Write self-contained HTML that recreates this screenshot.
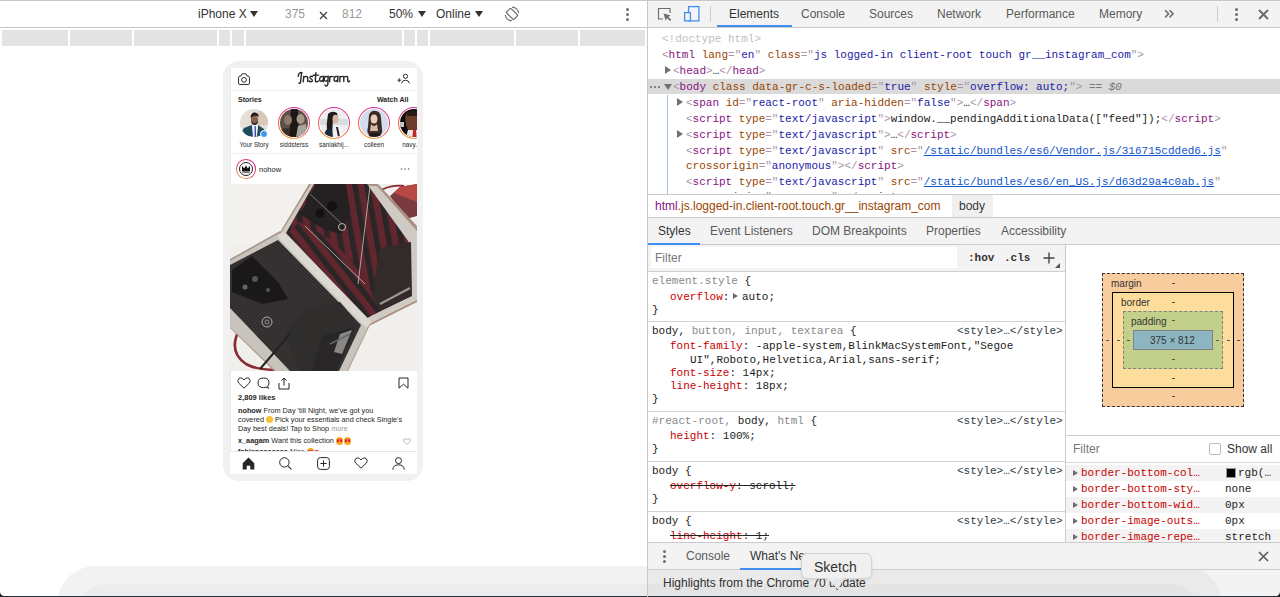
<!DOCTYPE html>
<html><head><meta charset="utf-8">
<style>
*{margin:0;padding:0;box-sizing:border-box}
html,body{width:1280px;height:597px;overflow:hidden;background:#fff;font-family:"Liberation Sans",sans-serif;font-size:12px;color:#333;position:relative}
.a{position:absolute}
.t{position:absolute;white-space:pre;line-height:16px}
.m{font-family:"Liberation Mono",monospace;font-size:11px}
.tg{color:#881280}.an{color:#994500}.av{color:#1a1aa6}.br{color:#a894a6}.dt{color:#c0c0c0}.lk{color:#1155cc;text-decoration:underline}
.pn{color:#c80000}
.dots{width:4px;height:14px}
.dots i{display:block;width:3px;height:3px;border-radius:50%;background:#6e6e6e;margin-bottom:2px}
.tri{position:absolute;width:0;height:0;border-top:4px solid transparent;border-bottom:4px solid transparent;border-left:6px solid #727272}
.tri.sm{border-top-width:3.8px;border-bottom-width:3.8px;border-left-width:5.5px;border-left-color:#6e6e6e}
.trid{position:absolute;width:0;height:0;border-left:4px solid transparent;border-right:4px solid transparent;border-top:6px solid #727272}
.tdn{position:absolute;width:0;height:0;border-left:4px solid transparent;border-right:4px solid transparent;border-top:6px solid #333}
</style></head><body>
<div class="a" style="left:0;top:0;width:1280px;height:1px;background:#c8c8c8"></div>
<!-- LEFT PANEL -->
<div class="a" style="left:0;top:1px;width:647px;height:27px;background:#fff;border-bottom:1px solid #c8c8c8"></div>
<div class="t" style="left:198px;top:6px;color:#333">iPhone X</div>
<div class="tdn" style="left:250px;top:11px"></div>
<div class="t" style="left:285px;top:6px;color:#999">375</div>
<svg class="a" style="left:319px;top:11px" width="9" height="9" viewBox="0 0 9 9"><path d="M1 1L8 8M8 1L1 8" stroke="#444" stroke-width="1.3"/></svg>
<div class="t" style="left:342px;top:6px;color:#999">812</div>
<div class="t" style="left:389px;top:6px;color:#333">50%</div>
<div class="tdn" style="left:418px;top:11px"></div>
<div class="t" style="left:436px;top:6px;color:#333">Online</div>
<div class="tdn" style="left:475px;top:11px"></div>
<svg class="a" style="left:504px;top:6px" width="16" height="16" viewBox="0 0 16 16"><rect x="4.85" y="2.7" width="6.3" height="10.4" rx="0.8" transform="rotate(-45 8 7.9)" fill="none" stroke="#707070" stroke-width="1.2"/><path d="M8.1 1.1A6.8 6.8 0 0 1 14.7 7M7.8 14.7A6.8 6.8 0 0 1 1.3 9" fill="none" stroke="#707070" stroke-width="1.2"/></svg>
<div class="a dots" style="left:626px;top:8px"><i></i><i></i><i></i></div>

<!-- ruler -->
<div class="a" style="left:2px;top:30px;width:643px;height:16px;background:#e3e3e3"></div>
<div class="a" style="left:68px;top:30px;width:2px;height:16px;background:#fff"></div>
<div class="a" style="left:132px;top:30px;width:2px;height:16px;background:#fff"></div>
<div class="a" style="left:217px;top:30px;width:2px;height:16px;background:#fff"></div>
<div class="a" style="left:230px;top:30px;width:2px;height:16px;background:#fff"></div>
<div class="a" style="left:244px;top:30px;width:2px;height:16px;background:#fff"></div>
<div class="a" style="left:402px;top:30px;width:2px;height:16px;background:#fff"></div>
<div class="a" style="left:415px;top:30px;width:2px;height:16px;background:#fff"></div>
<div class="a" style="left:428px;top:30px;width:2px;height:16px;background:#fff"></div>
<div class="a" style="left:514px;top:30px;width:2px;height:16px;background:#fff"></div>
<div class="a" style="left:578px;top:30px;width:2px;height:16px;background:#fff"></div>

<!-- PHONE -->
<div class="a" style="left:223px;top:61px;width:200px;height:420px;background:#f1f1f1;border-radius:16px"></div>
<div id="scr" class="a" style="left:230px;top:68px;width:187px;height:406px;background:#fff;overflow:hidden">
  <div class="a" style="left:0;top:0;width:1px;height:406px;background:#e8e8e8"></div>
  <!-- header -->
  <div class="a" style="left:0;top:22px;width:187px;height:1px;background:#efefef"></div>
  <svg class="a" style="left:7px;top:5px" width="14" height="13" viewBox="0 0 14 13"><path d="M1.5 4.6Q1.5 3.1 3 3.1H3.9L5.1 0.8H8.9L10.1 3.1H11Q12.5 3.1 12.5 4.6V10Q12.5 11.5 11 11.5H3Q1.5 11.5 1.5 10Z" fill="none" stroke="#262626" stroke-width="0.95"/><circle cx="7" cy="6.9" r="2.4" fill="none" stroke="#262626" stroke-width="0.95"/></svg>
  <svg class="a" style="left:67px;top:3px" width="54" height="17" viewBox="0 0 54 17"><path d="M1.2 5.2C1.5 2 3.5 1.2 5 1.6M4.6 1.8C4.2 5 3.8 9 3.4 11.8C3.2 12.5 2.4 12.6 2 12M6.2 10.8L6.8 5.4M6.8 6.6C7.5 5.2 10.5 4.8 10.6 6.5L10.8 10.6M15.6 5.6C14.5 4.8 12.4 5.4 13 7C13.6 8 15.8 8.4 15.4 9.8C15 11 13 11 12.2 10M18.9 1.8C18.6 5 18.3 8 18.4 10C18.6 11 20 11 21.4 10.2M16.2 4.3L21.6 4.1M26.4 6C25.5 5 23 5 22.6 8C22.3 10.5 24.5 11 26 9M26.6 5.2L26.2 10.8M30.8 6C30 5 27.5 5 27.2 8C27 10.5 29.5 10.8 30.8 8.8M31.2 5.2L30.8 13.5C30.6 15.5 28.2 15.5 28 14M32.6 10.8L32.9 5.4M32.9 7C33.5 5.4 35 5.2 36.2 5.6M40.8 6C39.9 5 37.4 5 37 8C36.7 10.5 38.9 11 40.4 9M41 5.2L40.6 10.8M42.8 10.8L43 5.4M43 6.6C43.6 5.2 46.8 4.8 46.8 6.5L46.8 10.6M46.8 6.6C47.4 5.2 50.6 4.8 50.6 6.5L50.8 10.2C51 11 52 10.8 52.6 10" fill="none" stroke="#262626" stroke-width="1.4" stroke-linecap="round"/></svg>
  <svg class="a" style="left:166px;top:5px" width="14" height="12" viewBox="0 0 14 12"><path d="M1.3 7.2H5.3M3.3 5.2V9.2" stroke="#262626" stroke-width="0.9"/><circle cx="9.5" cy="3.3" r="2.1" fill="none" stroke="#262626" stroke-width="0.95"/><path d="M5.6 10.4Q6.2 7.2 9.5 7.2Q12.8 7.2 13.4 10.4" fill="none" stroke="#262626" stroke-width="0.95"/></svg>
  <!-- stories -->
  <div class="t" style="left:8px;top:24px;font-size:7px;font-weight:bold;color:#262626">Stories</div>
  <div class="t" style="left:147px;top:24px;font-size:7px;font-weight:bold;color:#262626">Watch All</div>
  <svg class="a" style="left:10px;top:41px" width="28" height="28" viewBox="0 0 28 28"><clipPath id="c0"><circle cx="14" cy="14" r="14"/></clipPath><g clip-path="url(#c0)"><rect width="28" height="28" fill="#e6dfd8"/><rect x="18" y="2" width="10" height="14" fill="#d8c8b8"/><path d="M0 26L4 19L12 16L14 28Z" fill="#1f4a62"/><path d="M26 28L24 20L18 16L16 28Z" fill="#1f4a62"/><path d="M12 16L18 16L17 28L13 28Z" fill="#f4f4f4"/><path d="M14.5 17L15.8 17L16.2 28L14.6 28Z" fill="#3a4ab0"/><ellipse cx="14.5" cy="11" rx="3.6" ry="4.5" fill="#8a6450"/><path d="M10.5 9Q11 3 15 3.5Q19 4 18.5 8L17 7Q14 6 12 8Z" fill="#1e1a18"/><path d="M11.5 12Q14.5 17 17.8 12L17.5 14.5Q14.5 17.5 11.8 14.5Z" fill="#2a1e18"/></g></svg>
<div class="a" style="left:29.5px;top:62px;width:8px;height:8px;border-radius:50%;background:#3897f0;border:1px solid #fff"></div>
<div class="t" style="left:-1px;width:50px;text-align:center;top:72.5px;font-size:6.3px;line-height:8px;color:#262626">Your Story</div>
<div class="a" style="left:47.8px;top:38.8px;width:32.4px;height:32.4px;border-radius:50%;background:conic-gradient(from 0deg,#d6249f,#e4406f 90deg,#f7a34b 180deg,#f58529 225deg,#e4406f 300deg,#d6249f)"></div>
<div class="a" style="left:48.8px;top:39.8px;width:30.4px;height:30.4px;border-radius:50%;background:#fff"></div>
<svg class="a" style="left:50px;top:41px" width="28" height="28" viewBox="0 0 28 28"><clipPath id="c1"><circle cx="14" cy="14" r="14"/></clipPath><g clip-path="url(#c1)"><rect width="28" height="28" fill="#5e5048"/><path d="M11 0L18 0L19 28L9 28Z" fill="#1c1816"/><ellipse cx="8" cy="11" rx="4" ry="5" fill="#8e7868"/><ellipse cx="20.5" cy="10" rx="4" ry="5" fill="#a89888"/><path d="M16 28L18 17L26 15L28 28Z" fill="#a8a4a0"/><path d="M0 20L9 19L9 28L0 28Z" fill="#3a302a"/></g></svg>
<div class="t" style="left:39px;width:50px;text-align:center;top:72.5px;font-size:6.3px;line-height:8px;color:#262626">siddsterss</div>
<div class="a" style="left:87.8px;top:38.8px;width:32.4px;height:32.4px;border-radius:50%;background:conic-gradient(from 0deg,#d6249f,#e4406f 90deg,#f7a34b 180deg,#f58529 225deg,#e4406f 300deg,#d6249f)"></div>
<div class="a" style="left:88.8px;top:39.8px;width:30.4px;height:30.4px;border-radius:50%;background:#fff"></div>
<svg class="a" style="left:90px;top:41px" width="28" height="28" viewBox="0 0 28 28"><clipPath id="c2"><circle cx="14" cy="14" r="14"/></clipPath><g clip-path="url(#c2)"><rect width="28" height="28" fill="#eceef2"/><rect x="0" y="10" width="28" height="6" fill="#d8dce0"/><path d="M8 5Q12 1 17 4L18 9L13 10L12 26L7 26Q6 15 8 5Z" fill="#201c1c"/><ellipse cx="15.5" cy="10" rx="3" ry="4.2" fill="#d8b4a4"/><path d="M3 28L6 21L12 19L13 28Z" fill="#202a36"/><path d="M15 18L22 19L23 28L16 28Z" fill="#f4f4f8"/><path d="M16 18L18 18L20 28L18 28Z" fill="#222"/></g></svg>
<div class="t" style="left:79px;width:50px;text-align:center;top:72.5px;font-size:6.3px;line-height:8px;color:#262626">saniakhij...</div>
<div class="a" style="left:127.8px;top:38.8px;width:32.4px;height:32.4px;border-radius:50%;background:conic-gradient(from 0deg,#d6249f,#e4406f 90deg,#f7a34b 180deg,#f58529 225deg,#e4406f 300deg,#d6249f)"></div>
<div class="a" style="left:128.8px;top:39.8px;width:30.4px;height:30.4px;border-radius:50%;background:#fff"></div>
<svg class="a" style="left:130px;top:41px" width="28" height="28" viewBox="0 0 28 28"><clipPath id="c3"><circle cx="14" cy="14" r="14"/></clipPath><g clip-path="url(#c3)"><rect width="28" height="28" fill="#d2dcee"/><path d="M9 6Q11 1 16 2Q21 3 21 9L22 20Q23 25 19 27L10 27Q6 24 8 18Z" fill="#3c2a22"/><ellipse cx="14" cy="10" rx="3.4" ry="4.6" fill="#e6cebe"/><path d="M11 15Q14 19 17 15L18 22L10 22Z" fill="#d8b8a8"/><path d="M8 28L11 24L19 24L22 28Z" fill="#1c1a1a"/></g></svg>
<div class="t" style="left:119px;width:50px;text-align:center;top:72.5px;font-size:6.3px;line-height:8px;color:#262626">colleen</div>
<div class="a" style="left:167.8px;top:38.8px;width:32.4px;height:32.4px;border-radius:50%;background:conic-gradient(from 0deg,#d6249f,#e4406f 90deg,#f7a34b 180deg,#f58529 225deg,#e4406f 300deg,#d6249f)"></div>
<div class="a" style="left:168.8px;top:39.8px;width:30.4px;height:30.4px;border-radius:50%;background:#fff"></div>
<svg class="a" style="left:170px;top:41px" width="28" height="28" viewBox="0 0 28 28"><clipPath id="c4"><circle cx="14" cy="14" r="14"/></clipPath><g clip-path="url(#c4)"><rect width="28" height="28" fill="#0a0a0a"/><path d="M6 5Q12 1 20 4L21 12L20 21L8 21Q4 13 6 5Z" fill="#6a3a2a"/><path d="M7 3Q13 0 21 3L20 7L7 7Z" fill="#2a1a14"/><path d="M8 21L22 21L24 28L6 28Z" fill="#e8e8e8"/><path d="M13 21L16 21L16.5 28L12.5 28Z" fill="#c02828"/><rect x="0" y="13" width="4" height="5" fill="#c8c8c0"/></g></svg>
<div class="t" style="left:159px;width:50px;text-align:center;top:72.5px;font-size:6.3px;line-height:8px;color:#262626">navy.n...</div>
  <div class="a" style="left:0;top:85px;width:187px;height:1px;background:#efefef"></div>
  <!-- post header -->
  <div class="a" style="left:6px;top:91px;width:19.5px;height:19.5px;border-radius:50%;background:conic-gradient(from 200deg,#f7a34b,#e4406f 120deg,#d6249f 200deg,#e4406f 280deg,#f7a34b)"></div>
  <div class="a" style="left:7px;top:92px;width:17.5px;height:17.5px;border-radius:50%;background:#fff"></div>
  <div class="a" style="left:8.5px;top:93.5px;width:14.5px;height:14.5px;border-radius:50%;background:#fff;border:1.2px solid #222"></div>
  <svg class="a" style="left:11px;top:96.5px" width="10" height="10" viewBox="0 0 10 10"><path d="M1 0.8L3.2 3.6L5 0.2L6.8 3.6L9 0.8V6.6H1Z" fill="#111"/><rect x="1.5" y="7.2" width="7" height="0.9" fill="#555"/></svg>
  <div class="t" style="left:29px;top:97px;font-size:7.5px;line-height:10px;color:#1a1a1a">nohow</div>
  <svg class="a" style="left:170px;top:99px" width="10" height="4" viewBox="0 0 10 4"><circle cx="1.5" cy="2" r="0.75" fill="#555"/><circle cx="5" cy="2" r="0.75" fill="#555"/><circle cx="8.5" cy="2" r="0.75" fill="#555"/></svg>
  <!-- image -->
  <svg class="a" style="left:0;top:116px" width="187" height="187" viewBox="0 0 187 187">
<defs>
<pattern id="st" width="12" height="12" patternUnits="userSpaceOnUse" patternTransform="rotate(-10)"><rect width="12" height="12" fill="#62262f"/><rect width="5.5" height="12" fill="#2a2526"/></pattern>
<pattern id="st2" width="12" height="12" patternUnits="userSpaceOnUse" patternTransform="rotate(-38)"><rect width="12" height="12" fill="#62262f"/><rect width="5.5" height="12" fill="#2a2526"/></pattern>
<pattern id="cd" width="2.5" height="2.5" patternUnits="userSpaceOnUse" patternTransform="rotate(-50)"><rect width="2.5" height="2.5" fill="#3a3736"/><rect width="1" height="2.5" fill="#2a2828"/></pattern>
</defs>
<rect width="187" height="187" fill="#f1efec"/>
<rect x="0" y="0" width="90" height="60" fill="#f3f1ee"/>
<path d="M9 146Q-2 168 16 180Q30 188 62 185" fill="none" stroke="#8a2a30" stroke-width="2.6"/>
<path d="M148 8Q160 0 174 2" fill="none" stroke="#8a2a30" stroke-width="1.8"/>
<polygon points="160,12 170,3 187,0 187,32 176,35" fill="#7a3a40"/>
<polygon points="170,3 187,0 187,18 164,9" fill="#b84844"/>
<polygon points="79,0 148,0 188,43 187,118 139,142 49,50" fill="#a89080"/>
<polygon points="81,0 147,2 187,47 187,116 139,140 51,49" fill="#cfcac4"/>
<polygon points="84,0 137,0 176,54 180,60 181,112 137,134 56,49" fill="url(#st)"/>
<polygon points="57,49 70,38 100,55 125,80 140,105 150,126 137,134" fill="url(#st2)"/><path d="M75 42L135 100" stroke="#c8c4c0" stroke-width="0.8"/><path d="M140 2L128 100" stroke="#c8c4c0" stroke-width="0.8"/>
<polygon points="86,0 116,0 120,28 112,50 95,46 70,30" fill="#252122"/>
<circle cx="102" cy="22" r="5" fill="#121010"/>
<circle cx="90" cy="29" r="4.5" fill="#121010"/><path d="M80 10L112 40" stroke="#888" stroke-width="0.8"/>
<polygon points="150,64 181,58 182,112 150,127 142,110" fill="#332a2a"/>
<path d="M150 120L180 104" stroke="#9a9694" stroke-width="2"/>
<polygon points="0,75 50,47 140,141 118,187 44,187 0,144" fill="#a89888"/>
<polygon points="0,77 50,49 139,141 117,187 46,187 0,143" fill="#c8c3bd"/>
<polygon points="0,81 48,56 131,141 109,187 60,187 0,124" fill="url(#cd)"/>
<polygon points="2,86 22,72 48,98 58,115 32,120 2,108" fill="#1a1819"/>
<circle cx="25" cy="95" r="3" fill="#555"/><circle cx="15" cy="103" r="2.5" fill="#666"/><circle cx="38" cy="106" r="2" fill="#555"/>
<polygon points="75,125 110,118 128,139 107,187 70,187 55,150" fill="#302d2d"/>
<polygon points="92,152 124,143 106,187 82,187" fill="#282626"/><polygon points="110,150 122,146 112,170 104,168" fill="#8a8886"/>
<path d="M100 160L120 150" stroke="#666" stroke-width="1.5"/>
<path d="M50 50L139 141" stroke="#dcd8d2" stroke-width="8"/>
<path d="M30 185L60 150" stroke="#222" stroke-width="2"/>
<circle cx="112" cy="43" r="3.5" fill="none" stroke="#ddd" stroke-width="0.8"/>
<circle cx="37" cy="138" r="5" fill="none" stroke="#ccc" stroke-width="0.8"/>
<circle cx="37" cy="138" r="2" fill="none" stroke="#ccc" stroke-width="0.6"/>
</svg>

  <!-- actions -->
  <svg class="a" style="left:7px;top:309px" width="14" height="12" viewBox="0 0 14 12"><path d="M7 11.2L1.8 6.2Q0.6 4.8 0.9 3.2Q1.4 1 3.6 0.9Q5.6 0.9 7 3Q8.4 0.9 10.4 0.9Q12.6 1 13.1 3.2Q13.4 4.8 12.2 6.2Z" fill="none" stroke="#262626" stroke-width="1"/></svg>
  <svg class="a" style="left:27px;top:309px" width="13" height="12" viewBox="0 0 13 12"><path d="M10.6 9.4Q12 8 12 5.8Q12 1 6.5 1Q1 1 1 5.8Q1 10.6 6.5 10.6Q8 10.6 9.2 10.1L11.6 11.3Z" fill="none" stroke="#262626" stroke-width="1" stroke-linejoin="round"/></svg>
  <svg class="a" style="left:48px;top:309px" width="12" height="13" viewBox="0 0 12 13"><path d="M6 1.2V8.6M3.4 3.6L6 1L8.6 3.6M1 6V12H11V6" fill="none" stroke="#262626" stroke-width="1"/></svg>
  <svg class="a" style="left:168px;top:309px" width="11" height="12" viewBox="0 0 11 12"><path d="M1 1H10V11.2L5.5 7.2L1 11.2Z" fill="none" stroke="#262626" stroke-width="1" stroke-linejoin="round"/></svg>
  <div class="t" style="left:8px;top:325px;font-size:7.5px;line-height:10px;font-weight:bold;color:#262626">2,809 likes</div>
  <div class="t" style="left:8px;top:338px;font-size:7.3px;line-height:9px;color:#262626"><b>nohow</b> From Day 'till Night, we've got you
covered <span style="display:inline-block;width:7px;height:7px;border-radius:50%;background:#f7c23a;vertical-align:-1px"></span> Pick your essentials and check Single's
Day best deals! Tap to Shop <span style="color:#999">more</span></div>
  <div class="t" style="left:8px;top:368px;font-size:7.3px;line-height:9px;color:#262626"><b>x_aagam</b> Want this collection <span style="display:inline-block;width:7.5px;height:7.5px;border-radius:50%;background:radial-gradient(circle at 30% 45%,#e02040 0 18%,transparent 20%),radial-gradient(circle at 70% 45%,#e02040 0 18%,transparent 20%),#f5a623;vertical-align:-1.5px;margin-right:0.5px"></span><span style="display:inline-block;width:7.5px;height:7.5px;border-radius:50%;background:radial-gradient(circle at 30% 45%,#e02040 0 18%,transparent 20%),radial-gradient(circle at 70% 45%,#e02040 0 18%,transparent 20%),#f5a623;vertical-align:-1.5px;margin-right:0.5px"></span></div>
  <div class="t" style="left:8px;top:379px;font-size:7.3px;line-height:9px;color:#262626"><b>fabianaaaaaaa</b> Nice <span style="display:inline-block;width:7.5px;height:7.5px;border-radius:50%;background:radial-gradient(circle at 30% 45%,#e02040 0 18%,transparent 20%),radial-gradient(circle at 70% 45%,#e02040 0 18%,transparent 20%),#f5a623;vertical-align:-1.5px;margin-right:0.5px"></span><span style="color:#e02040">&#9829;</span></div>
  <svg class="a" style="left:173px;top:370px" width="8" height="7" viewBox="0 0 14 12"><path d="M7 11.2L1.8 6.2Q0.6 4.8 0.9 3.2Q1.4 1 3.6 0.9Q5.6 0.9 7 3Q8.4 0.9 10.4 0.9Q12.6 1 13.1 3.2Q13.4 4.8 12.2 6.2Z" fill="none" stroke="#999" stroke-width="1.2"/></svg>
  <!-- nav -->
  <div class="a" style="left:0;top:383px;width:187px;height:23px;background:#fff;border-top:1px solid #e6e6e6"></div>
  <svg class="a" style="left:12px;top:389px" width="13" height="13" viewBox="0 0 13 13"><path d="M6.5 0.5L12.3 6.3V12.5H8.3V8.7H4.7V12.5H0.7V6.3Z" fill="#262626"/></svg>
  <svg class="a" style="left:49px;top:389px" width="13" height="13" viewBox="0 0 13 13"><circle cx="5.4" cy="5.4" r="4.7" fill="none" stroke="#262626" stroke-width="1"/><path d="M8.8 8.8L12.4 12.4" stroke="#262626" stroke-width="1.1"/></svg>
  <svg class="a" style="left:87px;top:389px" width="13" height="13" viewBox="0 0 13 13"><rect x="0.6" y="0.6" width="11.8" height="11.8" rx="2.8" fill="none" stroke="#262626" stroke-width="1"/><path d="M6.5 3.4V9.6M3.4 6.5H9.6" stroke="#262626" stroke-width="1"/></svg>
  <svg class="a" style="left:124px;top:389px" width="14" height="12" viewBox="0 0 14 12"><path d="M7 11.2L1.8 6.2Q0.6 4.8 0.9 3.2Q1.4 1 3.6 0.9Q5.6 0.9 7 3Q8.4 0.9 10.4 0.9Q12.6 1 13.1 3.2Q13.4 4.8 12.2 6.2Z" fill="none" stroke="#262626" stroke-width="1"/></svg>
  <svg class="a" style="left:162px;top:389px" width="13" height="13" viewBox="0 0 13 13"><circle cx="6.5" cy="3.6" r="3" fill="none" stroke="#262626" stroke-width="1"/><path d="M0.8 12.6Q1.2 7.8 6.5 7.8Q11.8 7.8 12.2 12.6" fill="none" stroke="#262626" stroke-width="1"/></svg>
</div>

<!-- DEVTOOLS TOOLBAR -->
<div class="a" style="left:648px;top:1px;width:632px;height:27px;background:#f3f3f3;border-bottom:1px solid #cbcbcb"></div>
<svg class="a" style="left:656px;top:6px" width="18" height="18" viewBox="0 0 18 18"><path d="M7 13H2.5V2.5h11.5V7" fill="none" stroke="#6e6e6e" stroke-width="1.2"/><path d="M7.5 7.5l2.2 7.2 1.3-2.6 3 3 1.3-1.3-3-3 2.6-1.3z" fill="#6e6e6e"/></svg>
<svg class="a" style="left:683px;top:5px" width="18" height="18" viewBox="0 0 18 18"><rect x="5.6" y="1.6" width="10.3" height="14.3" fill="none" stroke="#3f8ef0" stroke-width="1.3"/><rect x="1.6" y="7.6" width="5.8" height="8.3" fill="#f3f3f3" stroke="#3f8ef0" stroke-width="1.3"/></svg>
<div class="a" style="left:710px;top:6px;width:1px;height:16px;background:#ccc"></div>
<div class="t" style="left:729px;top:6px;color:#333">Elements</div>
<div class="t" style="left:801px;top:6px;color:#5a5a5a">Console</div>
<div class="t" style="left:869px;top:6px;color:#5a5a5a">Sources</div>
<div class="t" style="left:937px;top:6px;color:#5a5a5a">Network</div>
<div class="t" style="left:1006px;top:6px;color:#5a5a5a">Performance</div>
<div class="t" style="left:1099px;top:6px;color:#5a5a5a">Memory</div>
<svg class="a" style="left:1164px;top:9px" width="11" height="10" viewBox="0 0 11 10"><path d="M1.2 1.2L4.6 4.8L1.2 8.4M5.6 1.2L9 4.8L5.6 8.4" fill="none" stroke="#6e6e6e" stroke-width="1.6"/></svg>
<div class="a" style="left:717px;top:25px;width:75px;height:2px;background:#3f8ef0"></div>
<div class="a" style="left:1217px;top:6px;width:1px;height:16px;background:#ccc"></div>
<div class="a dots" style="left:1235px;top:8px"><i></i><i></i><i></i></div>
<svg class="a" style="left:1258px;top:8.5px" width="11" height="11" viewBox="0 0 11 11"><path d="M1 1L10 10M10 1L1 10" stroke="#6a6a6a" stroke-width="1.9"/></svg>

<!-- ELEMENTS TREE -->
<div class="a" style="left:648px;top:79px;width:632px;height:15px;background:#dadada"></div>
<div class="a" style="left:667px;top:95px;width:1px;height:99px;background:#a6c3f2"></div>
<div class="t m" style="left:662px;top:31px"><span class="dt">&lt;!doctype html&gt;</span></div>
<div class="t m" style="left:662px;top:47px"><span class="br">&lt;</span><span class="tg">html</span> <span class="an">lang</span><span class="br">="</span><span class="av">en</span><span class="br">"</span> <span class="an">class</span><span class="br">="</span><span class="av">js logged-in client-root touch gr__instagram_com</span><span class="br">"&gt;</span></div>
<div class="tri" style="left:665px;top:66px"></div>
<div class="t m" style="left:673px;top:63px"><span class="br">&lt;</span><span class="tg">head</span><span class="br">&gt;</span><span style="color:#222">&#8230;</span><span class="br">&lt;/</span><span class="tg">head</span><span class="br">&gt;</span></div>
<div class="a" style="left:650px;top:86px;width:2px;height:2px;border-radius:50%;background:#666"></div><div class="a" style="left:654px;top:86px;width:2px;height:2px;border-radius:50%;background:#666"></div><div class="a" style="left:658px;top:86px;width:2px;height:2px;border-radius:50%;background:#666"></div>
<div class="trid" style="left:664px;top:84px"></div>
<div class="t m" style="left:673px;top:79px"><span class="br">&lt;</span><span class="tg">body</span> <span class="an">class data-gr-c-s-loaded</span><span class="br">="</span><span class="av">true</span><span class="br">"</span> <span class="an">style</span><span class="br">="</span><span class="av">overflow: auto;</span><span class="br">"&gt;</span> <span style="color:#777">== <i>$0</i></span></div>
<div class="tri" style="left:677px;top:98px"></div>
<div class="t m" style="left:686px;top:95px"><span class="br">&lt;</span><span class="tg">span</span> <span class="an">id</span><span class="br">="</span><span class="av">react-root</span><span class="br">"</span> <span class="an">aria-hidden</span><span class="br">="</span><span class="av">false</span><span class="br">"&gt;</span><span style="color:#222">&#8230;</span><span class="br">&lt;/</span><span class="tg">span</span><span class="br">&gt;</span></div>
<div class="t m" style="left:686px;top:111px"><span class="br">&lt;</span><span class="tg">script</span> <span class="an">type</span><span class="br">="</span><span class="av">text/javascript</span><span class="br">"&gt;</span><span style="color:#222">window.__pendingAdditionalData(["feed"]);</span><span class="br">&lt;/</span><span class="tg">script</span><span class="br">&gt;</span></div>
<div class="tri" style="left:677px;top:130px"></div>
<div class="t m" style="left:686px;top:127px"><span class="br">&lt;</span><span class="tg">script</span> <span class="an">type</span><span class="br">="</span><span class="av">text/javascript</span><span class="br">"&gt;</span><span style="color:#222">&#8230;</span><span class="br">&lt;/</span><span class="tg">script</span><span class="br">&gt;</span></div>
<div class="t m" style="left:686px;top:143px"><span class="br">&lt;</span><span class="tg">script</span> <span class="an">type</span><span class="br">="</span><span class="av">text/javascript</span><span class="br">"</span> <span class="an">src</span><span class="br">="</span><span class="lk">/static/bundles/es6/Vendor.js/316715cdded6.js</span><span class="br">"</span></div>
<div class="t m" style="left:686px;top:158px"><span class="an">crossorigin</span><span class="br">="</span><span class="av">anonymous</span><span class="br">"&gt;&lt;/</span><span class="tg">script</span><span class="br">&gt;</span></div>
<div class="t m" style="left:686px;top:174px"><span class="br">&lt;</span><span class="tg">script</span> <span class="an">type</span><span class="br">="</span><span class="av">text/javascript</span><span class="br">"</span> <span class="an">src</span><span class="br">="</span><span class="lk">/static/bundles/es6/en_US.js/d63d29a4c0ab.js</span><span class="br">"</span></div>
<div class="t m" style="left:686px;top:189px"><span class="an">crossorigin</span><span class="br">="</span><span class="av">anonymous</span><span class="br">"&gt;&lt;/</span><span class="tg">script</span><span class="br">&gt;</span></div>

<!-- BREADCRUMB -->
<div class="a" style="left:648px;top:194px;width:632px;height:24px;background:#fff;border-top:1px solid #cbcbcb;border-bottom:1px solid #cbcbcb"></div>
<div class="a" style="left:952px;top:195px;width:41px;height:22px;background:#f0f0f0"></div>
<div class="t" style="left:655px;top:198px"><span style="color:#881280">html</span><span style="color:#994500">.js.logged-in.client-root.touch.gr__instagram_com</span></div>
<div class="t" style="left:959px;top:198px;color:#303942">body</div>

<!-- STYLES TABS -->
<div class="a" style="left:648px;top:218px;width:632px;height:27px;background:#f3f3f3;border-bottom:1px solid #cbcbcb"></div>
<div class="t" style="left:658px;top:223px;color:#333">Styles</div>
<div class="t" style="left:710px;top:223px;color:#5a5a5a">Event Listeners</div>
<div class="t" style="left:812px;top:223px;color:#5a5a5a">DOM Breakpoints</div>
<div class="t" style="left:926px;top:223px;color:#5a5a5a">Properties</div>
<div class="t" style="left:1001px;top:223px;color:#5a5a5a">Accessibility</div>
<div class="a" style="left:648px;top:243px;width:52px;height:2px;background:#3f8ef0"></div>

<!-- STYLES FILTER -->
<div class="a" style="left:648px;top:245px;width:418px;height:27px;background:#f3f3f3;border-bottom:1px solid #d0d0d0"></div>
<div class="a" style="left:651px;top:247px;width:306px;height:21px;background:#fff"></div>
<div class="t" style="left:655px;top:250px;color:#777">Filter</div>
<div class="t m" style="left:968px;top:250px;color:#333;font-weight:bold">:hov</div>
<div class="t m" style="left:1004px;top:250px;color:#333;font-weight:bold">.cls</div>
<svg class="a" style="left:1043px;top:252px" width="12" height="12" viewBox="0 0 12 12"><path d="M6 0.5V11.5M0.5 6H11.5" stroke="#444" stroke-width="1.4"/></svg>
<div class="a" style="left:1055px;top:263px;width:0;height:0;border-left:5px solid transparent;border-bottom:5px solid #555"></div>

<!-- STYLES RULES -->
<div class="a" style="left:1065px;top:245px;width:1px;height:298px;background:#cbcbcb"></div>
<div class="t m" style="left:652px;top:273px"><span style="color:#888">element.style</span> <span style="color:#222">{</span></div>
<div class="t m" style="left:670px;top:289px"><span class="pn">overflow</span><span style="color:#222">:</span></div>
<div class="tri sm" style="left:733px;top:293px"></div>
<div class="t m" style="left:742px;top:289px;color:#222">auto;</div>
<div class="t m" style="left:652px;top:302px;color:#222">}</div>
<div class="a" style="left:648px;top:321px;width:417px;height:1px;background:#d4d4d4"></div>

<div class="t m" style="left:652px;top:323px"><span style="color:#222">body,</span> <span style="color:#888">button, input, textarea</span> <span style="color:#222">{</span></div>
<div class="t m" style="left:957px;top:323px;color:#303942">&lt;style&gt;&#8230;&lt;/style&gt;</div>
<div class="t m" style="left:670px;top:338px"><span class="pn">font-family</span><span style="color:#222">: -apple-system,BlinkMacSystemFont,"Segoe</span></div>
<div class="t m" style="left:690px;top:352px;color:#222">UI",Roboto,Helvetica,Arial,sans-serif;</div>
<div class="t m" style="left:670px;top:365px"><span class="pn">font-size</span><span style="color:#222">: 14px;</span></div>
<div class="t m" style="left:670px;top:378px"><span class="pn">line-height</span><span style="color:#222">: 18px;</span></div>
<div class="t m" style="left:652px;top:391px;color:#222">}</div>
<div class="a" style="left:648px;top:411px;width:417px;height:1px;background:#d4d4d4"></div>

<div class="t m" style="left:652px;top:413px"><span style="color:#888">#react-root,</span> <span style="color:#222">body,</span> <span style="color:#888">html</span> <span style="color:#222">{</span></div>
<div class="t m" style="left:957px;top:413px;color:#303942">&lt;style&gt;&#8230;&lt;/style&gt;</div>
<div class="t m" style="left:670px;top:428px"><span class="pn">height</span><span style="color:#222">: 100%;</span></div>
<div class="t m" style="left:652px;top:441px;color:#222">}</div>
<div class="a" style="left:648px;top:461px;width:417px;height:1px;background:#d4d4d4"></div>

<div class="t m" style="left:652px;top:463px;color:#222">body {</div>
<div class="t m" style="left:957px;top:463px;color:#303942">&lt;style&gt;&#8230;&lt;/style&gt;</div>
<div class="t m" style="left:670px;top:478px;text-decoration:line-through;color:#222"><span class="pn">overflow-y</span>: scroll;</div>
<div class="t m" style="left:652px;top:491px;color:#222">}</div>
<div class="a" style="left:648px;top:511px;width:417px;height:1px;background:#d4d4d4"></div>

<div class="t m" style="left:652px;top:513px;color:#222">body {</div>
<div class="t m" style="left:957px;top:513px;color:#303942">&lt;style&gt;&#8230;&lt;/style&gt;</div>
<div class="t m" style="left:670px;top:528px;text-decoration:line-through;color:#222"><span class="pn">line-height</span>: 1;</div>

<!-- COMPUTED -->
<div class="a" style="left:1102px;top:273px;width:142px;height:134px;background:#f9cc9d;border:1px dashed #333"></div>
<div class="a" style="left:1112px;top:292px;width:122px;height:96px;background:#fddd9b;border:1px solid #000"></div>
<div class="a" style="left:1123px;top:311px;width:100px;height:58px;background:#c3d08b;border:1px dashed #808080"></div>
<div class="a" style="left:1133px;top:330px;width:80px;height:20px;background:#8cb6c0;border:1px solid #808080"></div>
<div class="a" style="left:1172px;top:283px;width:2.5px;height:1.2px;background:#555"></div>
<div class="a" style="left:1172px;top:302px;width:2.5px;height:1.2px;background:#555"></div>
<div class="a" style="left:1172px;top:320px;width:2.5px;height:1.2px;background:#555"></div>
<div class="a" style="left:1172px;top:359px;width:2.5px;height:1.2px;background:#555"></div>
<div class="a" style="left:1172px;top:378px;width:2.5px;height:1.2px;background:#555"></div>
<div class="a" style="left:1172px;top:396px;width:2.5px;height:1.2px;background:#555"></div>
<div class="a" style="left:1106px;top:340px;width:2.5px;height:1.2px;background:#555"></div>
<div class="a" style="left:1117px;top:340px;width:2.5px;height:1.2px;background:#555"></div>
<div class="a" style="left:1127px;top:340px;width:2.5px;height:1.2px;background:#555"></div>
<div class="a" style="left:1216px;top:340px;width:2.5px;height:1.2px;background:#555"></div>
<div class="a" style="left:1227px;top:340px;width:2.5px;height:1.2px;background:#555"></div>
<div class="a" style="left:1237px;top:340px;width:2.5px;height:1.2px;background:#555"></div>
<div class="t" style="left:1111px;top:276px;font-size:10px;color:#333">margin</div>
<div class="t" style="left:1121px;top:295px;font-size:10px;color:#333">border</div>
<div class="t" style="left:1131px;top:314px;font-size:10px;color:#333">padding</div>
<div class="t" style="left:1150px;top:333px;font-size:10px;color:#333">375 &#215; 812</div>

<div class="a" style="left:1066px;top:435px;width:214px;height:28px;background:#fff;border-top:1px solid #cbcbcb;border-bottom:1px solid #d8d8d8"></div>
<div class="t" style="left:1073px;top:441px;color:#777">Filter</div>
<div class="a" style="left:1209px;top:443px;width:12px;height:12px;border:1px solid #bbb;border-radius:2px;background:#fff"></div>
<div class="t" style="left:1227px;top:441px;color:#333">Show all</div>
<div class="a" style="left:1066px;top:465px;width:214px;height:16px;background:#f3f3f3"></div>
<div class="a" style="left:1066px;top:497px;width:214px;height:16px;background:#f3f3f3"></div>
<div class="a" style="left:1066px;top:529px;width:214px;height:14px;background:#f3f3f3"></div>
<div class="tri sm" style="left:1073px;top:470px"></div>
<div class="tri sm" style="left:1073px;top:486px"></div>
<div class="tri sm" style="left:1073px;top:502px"></div>
<div class="tri sm" style="left:1073px;top:518px"></div>
<div class="tri sm" style="left:1073px;top:534px"></div>
<div class="t m pn" style="left:1081px;top:465px">border-bottom-col&#8230;</div>
<div class="t m pn" style="left:1081px;top:481px">border-bottom-sty&#8230;</div>
<div class="t m pn" style="left:1081px;top:497px">border-bottom-wid&#8230;</div>
<div class="t m pn" style="left:1081px;top:513px">border-image-outs&#8230;</div>
<div class="t m pn" style="left:1081px;top:529px">border-image-repe&#8230;</div>
<div class="a" style="left:1226px;top:468px;width:10px;height:10px;background:#000;border:1px solid #999"></div>
<div class="t m" style="left:1238px;top:465px;color:#222">rgb(&#8230;</div>
<div class="t m" style="left:1225px;top:481px;color:#222">none</div>
<div class="t m" style="left:1225px;top:497px;color:#222">0px</div>
<div class="t m" style="left:1225px;top:513px;color:#222">0px</div>
<div class="t m" style="left:1225px;top:529px;color:#222">stretch</div>

<!-- DRAWER -->
<div class="a" style="left:648px;top:570px;width:632px;height:27px;background:#f3f3f3"></div>
<div class="t" style="left:663px;top:575px;color:#333">Highlights from the Chrome 70 update</div>
<!-- DOCK overlay -->
<div class="a" style="left:0;top:560px;width:647px;height:37px;overflow:hidden">
<div class="a" style="left:57px;top:6px;width:1165px;height:80px;border-radius:38px;background:rgba(0,0,0,0.052)"></div>
<div class="a" style="left:76px;top:24px;width:1125px;height:60px;border-radius:30px;background:rgba(0,0,0,0.025)"></div>
</div>
<div class="a" style="left:648px;top:560px;width:632px;height:37px;overflow:hidden">
<div class="a" style="left:-591px;top:6px;width:1165px;height:80px;border-radius:38px;background:rgba(0,0,0,0.035)"></div>
<div class="a" style="left:-572px;top:24px;width:1125px;height:60px;border-radius:30px;background:rgba(0,0,0,0.022)"></div>
</div>
<div class="a" style="left:0;top:596px;width:1280px;height:1px;background:#26313a"></div>


<div class="a" style="left:648px;top:542px;width:632px;height:28px;background:#f3f3f3;border-top:1px solid #cbcbcb;border-bottom:1px solid #cbcbcb"></div>
<div class="a dots" style="left:663px;top:550px"><i></i><i></i><i></i></div>
<div class="t" style="left:686px;top:548px;color:#5a5a5a">Console</div>
<div class="t" style="left:750px;top:548px;color:#333">What's New</div>
<div class="a" style="left:740px;top:568px;width:80px;height:2px;background:#3f8ef0"></div>
<svg class="a" style="left:1258px;top:551px" width="11" height="11" viewBox="0 0 11 11"><path d="M1 1L10 10M10 1L1 10" stroke="#5a5a5a" stroke-width="1.6"/></svg>
<svg class="a" style="left:0;top:589px" width="8" height="8" viewBox="0 0 8 8"><path d="M0 0V8H8V7.5H5A5 5 0 0 1 0 2.5Z" fill="#1e2226"/></svg>
<svg class="a" style="left:1272px;top:589px" width="8" height="8" viewBox="0 0 8 8"><path d="M8 0V8H0V7.5H3A5 5 0 0 0 8 2.5Z" fill="#1e2226"/></svg>
<div class="a" style="left:647px;top:1px;width:1px;height:596px;background:#c8c8c8"></div>
<!-- tooltip -->
<div class="a" style="left:801px;top:553px;width:71px;height:26px;border-radius:6px;background:#f0f0f0;border:1px solid #d4d4d4;box-shadow:0 1px 3px rgba(0,0,0,0.1)"></div>
<svg class="a" style="left:826px;top:577px" width="20" height="13" viewBox="0 0 20 13"><path d="M1 1L18 1L12 12Z" fill="#eeeeee" fill-opacity="0.92"/><path d="M1 1L12 12L18 1" fill="none" stroke="#d8d8d8" stroke-width="0.8"/></svg>
<div class="t" style="left:814px;top:559px;font-size:14px;line-height:16px;color:#333">Sketch</div>
</body></html>
